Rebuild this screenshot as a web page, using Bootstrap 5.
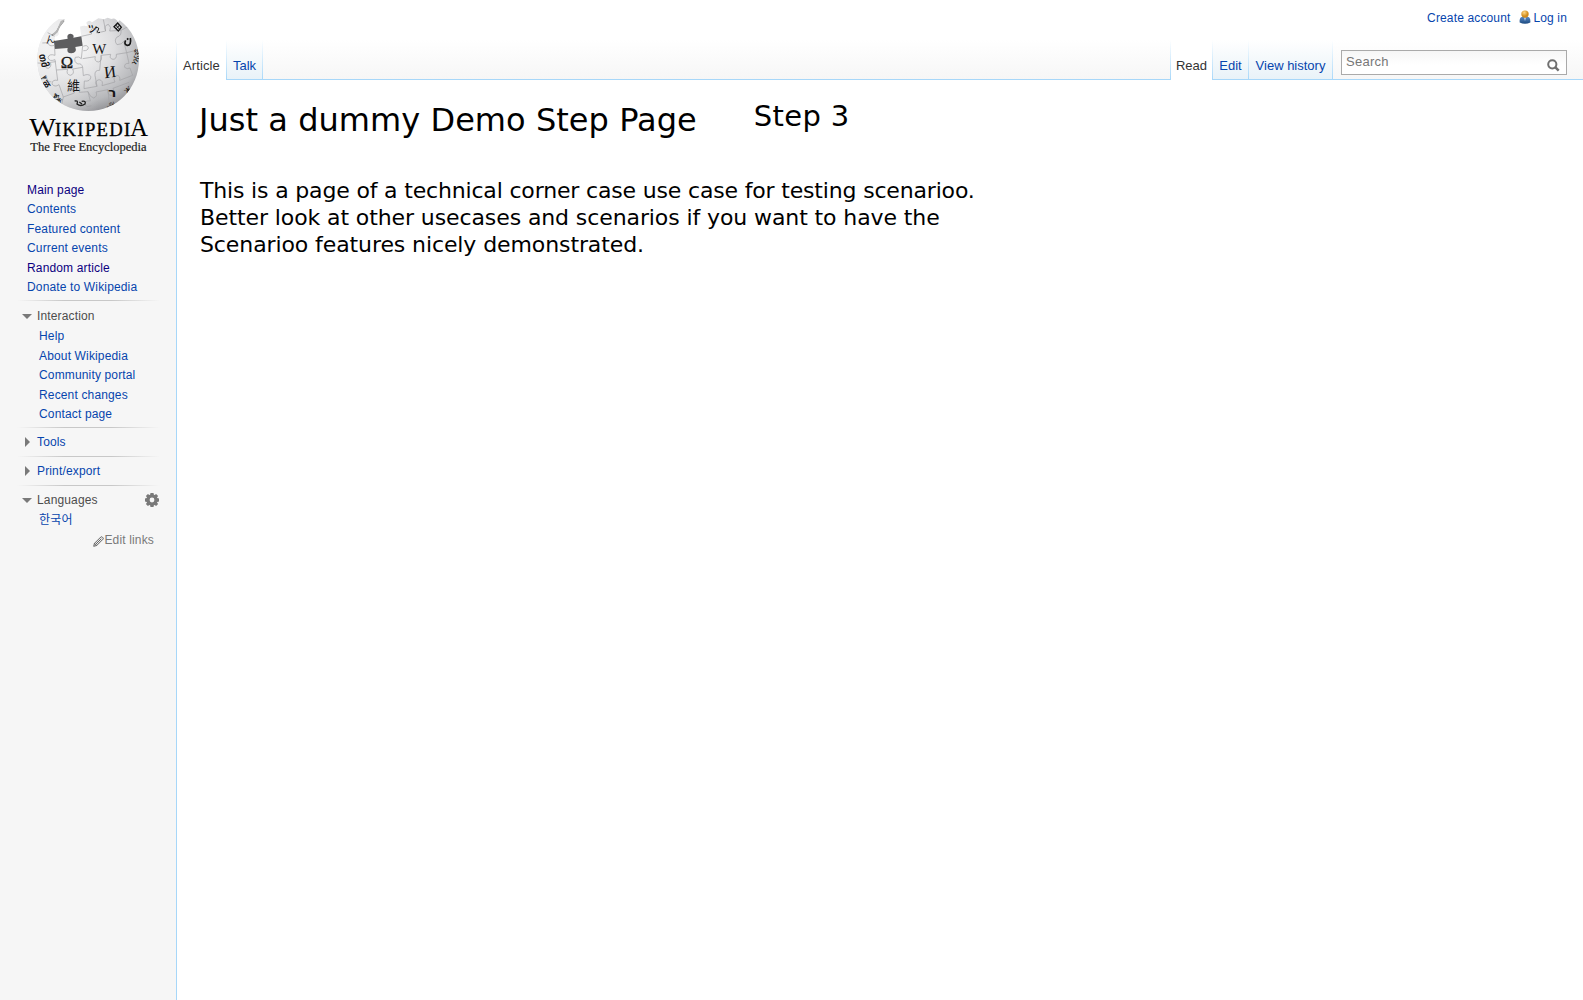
<!DOCTYPE html>
<html lang="en">
<head>
<meta charset="utf-8">
<title>Just a dummy Demo Step Page</title>
<link href="https://cdn.jsdelivr.net/npm/bootstrap@5.3.0/dist/css/bootstrap.min.css" rel="stylesheet">
<style>
body{font-family:"Liberation Sans","Noto Sans CJK KR",sans-serif;font-size:12px;color:#000;background:#fff}
a{color:#0645ad;text-decoration:none}
a:hover{text-decoration:underline}
.side{width:176px;letter-spacing:.15px;background:linear-gradient(#fff 50%,#f6f6f6) 0 0/100% 80px no-repeat #f6f6f6}
.side-logo{margin:5px 0 0 20px;letter-spacing:0}
.side-logo svg{display:block}
.side ul{line-height:19.5px}
.side li{height:19.5px}
.side .visited{color:#0b0080}
.first-menu{padding:15.6px 0 0 27px}
.rule{height:1px;margin-left:17px;width:143px;background:linear-gradient(90deg,#f6f6f6,#c8c8c8 33%,#c8c8c8 66%,#f6f6f6)}
.rule.spaced{margin-top:2px}
.head{height:28px;padding:0 17px 0 22px;color:#4d4d4d}
.head.open{height:26.5px;padding-top:4px}
.head.langs{height:25.5px}
.head svg{width:10px;height:10px;margin-right:5px;fill:#797979}
.head .gear{width:14px;height:14px;margin:0}
.sub{padding-left:39px}
.edit-links{color:#797979;padding-right:22px;height:18px}
.pane-top{height:80px;background:linear-gradient(#fff 50%,#f6f6f6);box-shadow:inset 0 -1px #a7d7f9}
.personal{height:40px;padding:11px 16px 0 0;letter-spacing:.14px}
.person{margin:-1px 1px 0 8px}
.tabs{height:40px;font-size:13px}
.tabs a{height:40px;padding-top:18px;text-align:center;background:linear-gradient(#fff,#e8f2f8);box-shadow:inset 0 -1px #a7d7f9;line-height:16px;white-space:nowrap}
.tabs a.now{color:#333;background:#fff;box-shadow:none}
.w-article{width:49px;letter-spacing:.1px}
.w-short{width:35px}
.w-read{width:41px}
.w-history{width:83px}
.sep{width:1px;background:linear-gradient(#fff,#a7d7f9)}
.find{width:226px;height:25px;margin:10px 16px 0 8px;border:1px solid #aaa;background:linear-gradient(#f6f6f6,#fff 60%)}
.find input{border:0;background:none;outline:0;padding:0 0 1px 4px;font-size:13px;letter-spacing:.25px;width:201px}
.find input::placeholder{color:#777;opacity:1}
.find svg{margin:6px 0 0 4px}
.article{font-family:"DejaVu Sans",sans-serif;padding:19px 0 0 22px;border-left:1px solid #a7d7f9}
.article h1{font-size:32px;line-height:42px;margin:0;font-weight:400;letter-spacing:.04px}
.article h2{font-size:29px;line-height:34px;margin:0 0 0 57px;font-weight:400;letter-spacing:.35px}
.article p{font-size:22px;line-height:27px;width:800px;margin:36px 0 0 1px;letter-spacing:-.1px}
.article .tight{letter-spacing:-.17px}
</style>
</head>
<body>
<div class="d-flex vh-100 overflow-hidden">
<nav class="side flex-shrink-0">
<a class="side-logo d-block" href="#" aria-label="Wikipedia">
<svg width="140" height="160" viewBox="0 0 420 480">
<defs>
<radialGradient id="g" cx=".42" cy=".3" r=".75"><stop offset="0" stop-color="#f4f4f4"/><stop offset=".45" stop-color="#dedee0"/><stop offset=".8" stop-color="#b7b8bb"/><stop offset="1" stop-color="#8c8c90"/></radialGradient>
<linearGradient id="l" x1="0" x2="1"><stop offset="0" stop-color="#fff" stop-opacity=".65"/><stop offset=".6" stop-color="#fff" stop-opacity="0"/></linearGradient>
<path id="globe" d="M134 42L116 43C70 72 51 122 52 168C55 255 123 318 205 318C291 318 356 250 357 164C357 116 336 74 299 46L294 51Q286 36 274 42L263 38L252 43L235 40L216 52Q207 42 199 53L203 64Q191 60 180 65L184 94L161 99Q157 84 147 91Q144 98 146 102L103 110L104 94Q117 94 116 83Q105 77 119 62Z"/>
<clipPath id="c"><use href="#globe"/></clipPath>
</defs>
<use href="#globe" fill="url(#g)"/><use href="#globe" fill="url(#l)"/>
<path d="M102 108L143 101Q139 88 151 86Q164 88 160 98L184 94L188 122L166 126Q172 143 154 145Q138 145 143 129L104 132Z" fill="#5d5d5f"/>
<g clip-path="url(#c)" fill="none" stroke="#a2a2a5" stroke-width="2">
<path d="M104 132L105 151Q87 145 84 158Q88 171 105 164L109 195L143 193Q137 208 151 211Q165 207 158 192L188 187Q185 174 174 177Q160 171 166 157Q178 153 184 161L188 122M184 94L215 87Q208 76 217 70Q231 70 230 84L257 78Q250 62 265 58Q276 66 269 78L303 76Q305 93 291 96Q281 107 291 119Q306 119 311 109L320 143L289 148Q291 162 279 163Q267 161 272 148L243 151Q249 167 235 171Q222 169 226 155L188 161M188 187L190 212Q205 204 213 215Q211 231 193 228L192 251L231 244Q221 228 237 224Q251 226 246 242L285 231Q277 216 290 211Q302 212 299 226L338 211M109 195L113 226Q96 223 96 237Q104 248 117 239L130 276L163 264Q156 249 170 246Q183 248 178 262L204 260Q211 278 221 279Q234 274 228 261L264 254Q262 272 276 272Q287 265 279 250L327 232M52 174L74 175Q74 190 85 190Q96 185 91 172L107 170M61 222L81 220Q84 233 94 230M130 276L125 299M204 260L211 288Q194 285 195 300Q202 309 214 302M264 254L268 299M320 143L353 135M320 143L327 175Q312 174 314 187Q321 194 330 189L338 211M303 76L327 63M257 78L250 43M83 83L104 94M67 114L84 113Q86 126 104 121"/>
<path d="M190 124Q201 118 205 128Q204 138 190 137M243 151L239 196Q223 195 225 211L231 244"/>
</g>
<g font-family="Liberation Serif,serif" fill="#151515" clip-path="url(#c)">
<text x="122" y="190" font-size="50" stroke="#151515">Ω</text>
<text x="217" y="148" font-size="43" textLength="42" lengthAdjust="spacingAndGlyphs">W</text>
<text x="252" y="218" font-size="50" transform="rotate(-7 270 200)">И</text>
<text x="141" y="255" font-size="39" font-family="Noto Sans CJK TC,sans-serif">維</text>
<text x="265" y="277" font-size="40" font-weight="bold" font-family="DejaVu Sans,sans-serif">ר</text>
<text x="203" y="83" font-size="29" font-weight="bold" transform="rotate(12 220 76)">ツ</text>
<path d="M228 68Q240 66 234 76Q229 85 240 82" fill="none" stroke="#151515" stroke-width="3"/>
<path d="M282 65L293 54L304 67L295 78Z" fill="none" stroke="#151515" stroke-width="4"/><path d="M287 60L299 73M299 60L288 72" stroke="#151515" stroke-width="3"/>
<path d="M331 99Q335 122 321 121Q311 117 317 106M321 104L325 100" fill="none" stroke="#151515" stroke-width="5"/>
<text x="75" y="113" font-size="30" transform="rotate(-10 84 101)">ん</text>
<text x="57" y="170" font-size="29" font-weight="bold" transform="rotate(75 69 160)">თმ</text>
<text x="64" y="235" font-size="27" font-weight="bold" transform="rotate(55 75 222)">ᚠळ</text>
<text x="333" y="179" font-size="28" transform="rotate(-72 344 167)">ਅॐ</text>
<path d="M164 288Q176 285 171 297Q182 306 195 297Q199 286 185 289M178 291L186 297" fill="none" stroke="#222" stroke-width="4"/>
<text x="98" y="281" font-size="24" font-weight="bold" transform="rotate(35 105 274)">ጀж</text>
<text x="257" y="304" font-size="24" transform="rotate(-20 270 298)">ஆ</text>
<text x="308" y="264" font-size="23" font-weight="bold" transform="rotate(-45 320 250)">Ж</text>
</g>
<path d="M111 78L119 63L132 47M95 91L105 85" stroke="#777" stroke-width="4" fill="none"/>
<path d="M122 48L134 43L130 52L119 66L114 81L101 92L97 88L111 74Z" fill="#b5b5b5"/>
<g font-family="Liberation Serif,serif" fill="#000">
<text x="28" y="392" font-size="75" textLength="80" lengthAdjust="spacingAndGlyphs">W</text>
<text x="105" y="392" font-size="56" textLength="226" lengthAdjust="spacing" stroke="#000">IKIPEDI</text>
<text x="330" y="392" font-size="75" textLength="54" lengthAdjust="spacingAndGlyphs">A</text>
<text x="31" y="437" font-size="38" textLength="349" lengthAdjust="spacingAndGlyphs" fill="#222" stroke="#222" stroke-width=".6">The Free Encyclopedia</text>
</g>
</svg></a>
<ul class="list-unstyled first-menu mb-0">
<li><a class="visited" href="#">Main page</a></li><li><a href="#">Contents</a></li><li><a href="#">Featured content</a></li><li><a href="#">Current events</a></li><li><a class="visited" href="#">Random article</a></li><li><a href="#">Donate to Wikipedia</a></li>
</ul>
<div class="rule spaced"></div>
<div class="head open d-flex align-items-center"><svg viewBox="0 0 10 10"><path d="M0 3H10L5 8Z"/></svg><span>Interaction</span></div>
<ul class="list-unstyled sub mb-0">
<li><a href="#">Help</a></li><li><a href="#">About Wikipedia</a></li><li><a href="#">Community portal</a></li><li><a href="#">Recent changes</a></li><li><a href="#">Contact page</a></li>
</ul>
<div class="rule spaced"></div>
<div class="head d-flex align-items-center"><svg viewBox="0 0 10 10"><path d="M3 0V10L8 5Z"/></svg><a href="#">Tools</a></div>
<div class="rule"></div>
<div class="head d-flex align-items-center"><svg viewBox="0 0 10 10"><path d="M3 0V10L8 5Z"/></svg><a href="#">Print/export</a></div>
<div class="rule"></div>
<div class="head open langs d-flex align-items-center"><svg viewBox="0 0 10 10"><path d="M0 3H10L5 8Z"/></svg><span class="flex-grow-1">Languages</span>
<svg class="gear" viewBox="0 0 14 14"><path fill-rule="evenodd" d="M5.5 0H8.5L8.9 1.7L9.6 2L11.1 .9L13.1 2.9L12 4.4L12.3 5.1L14 5.5V8.5L12.3 8.9L12 9.6L13.1 11.1L11.1 13.1L9.6 12L8.9 12.3L8.5 14H5.5L5.1 12.3L4.4 12L2.9 13.1L.9 11.1L2 9.6L1.7 8.9L0 8.5V5.5L1.7 5.1L2 4.4L.9 2.9L2.9 .9L4.4 2L5.1 1.7ZM7 4.6A2.4 2.4 0 1 0 7 9.4A2.4 2.4 0 1 0 7 4.6Z"/></svg></div>
<ul class="list-unstyled sub mb-0"><li><a href="#" lang="ko">한국어</a></li></ul>
<div class="edit-links d-flex justify-content-end align-items-center"><svg width="11" height="11" viewBox="0 0 11 11" class="mt-1"><path d="M.7 10.3L1.5 7.3L7.8 1Q8.5.4 9.3 1.1L10 1.8Q10.6 2.5 10 3.2L3.7 9.5ZM1.5 7.3L3.7 9.5M2.8 8.2L8.3 2.7" fill="#eee" stroke="#555" stroke-width=".9"/></svg><span>Edit links</span></div>
</nav>
<main class="flex-grow-1 d-flex flex-column">
<header class="pane-top">
<div class="personal d-flex justify-content-end align-items-start lh-sm"><a href="#">Create account</a>
<svg class="person" width="14" height="14" viewBox="0 0 14 14"><defs><linearGradient id="b" x2="0" y2="1"><stop stop-color="#5a8ac6"/><stop offset="1" stop-color="#1b4a80"/></linearGradient><radialGradient id="o" cx=".4" cy=".3"><stop stop-color="#ffd884"/><stop offset="1" stop-color="#d18b1c"/></radialGradient></defs><path d="M1.7 12.4Q1 7 5 6.8H9Q13 7 12.3 12.4Q7 15 1.7 12.4Z" fill="url(#b)"/><path d="M6 7.5L7 11L8 7.5Z" fill="#c8d9ed"/><circle cx="7" cy="4.1" r="3.7" fill="url(#o)"/></svg>
<a href="#">Log in</a></div>
<div class="tabs d-flex">
<span class="sep"></span><a class="now w-article" href="#">Article</a><span class="sep"></span><a class="w-short" href="#">Talk</a><span class="sep"></span>
<span class="sep ms-auto"></span><a class="now w-read" href="#">Read</a><span class="sep"></span><a class="w-short" href="#">Edit</a><span class="sep"></span><a class="w-history" href="#">View history</a><span class="sep"></span>
<form class="find d-flex align-items-center"><input type="text" placeholder="Search" aria-label="Search">
<svg width="13" height="13" viewBox="0 0 13 13" fill="none" stroke="#707070"><circle cx="5.3" cy="5.3" r="4.1" stroke-width="2"/><path d="M8.2 8.2L11.7 11.7" stroke-width="2.5"/></svg></form>
</div>
</header>
<section class="article flex-grow-1">
<div class="d-flex align-items-start"><h1>Just a dummy Demo Step Page</h1><h2>Step 3</h2></div>
<p><span class="tight">This is a page of a technical corner case use case for testing scenarioo.</span><br>Better look at other usecases and scenarios if you want to have the<br>Scenarioo features nicely demonstrated.</p>
</section>
</main>
</div>
<script src="https://cdn.jsdelivr.net/npm/bootstrap@5.3.0/dist/js/bootstrap.bundle.min.js"></script>
</body>
</html>
